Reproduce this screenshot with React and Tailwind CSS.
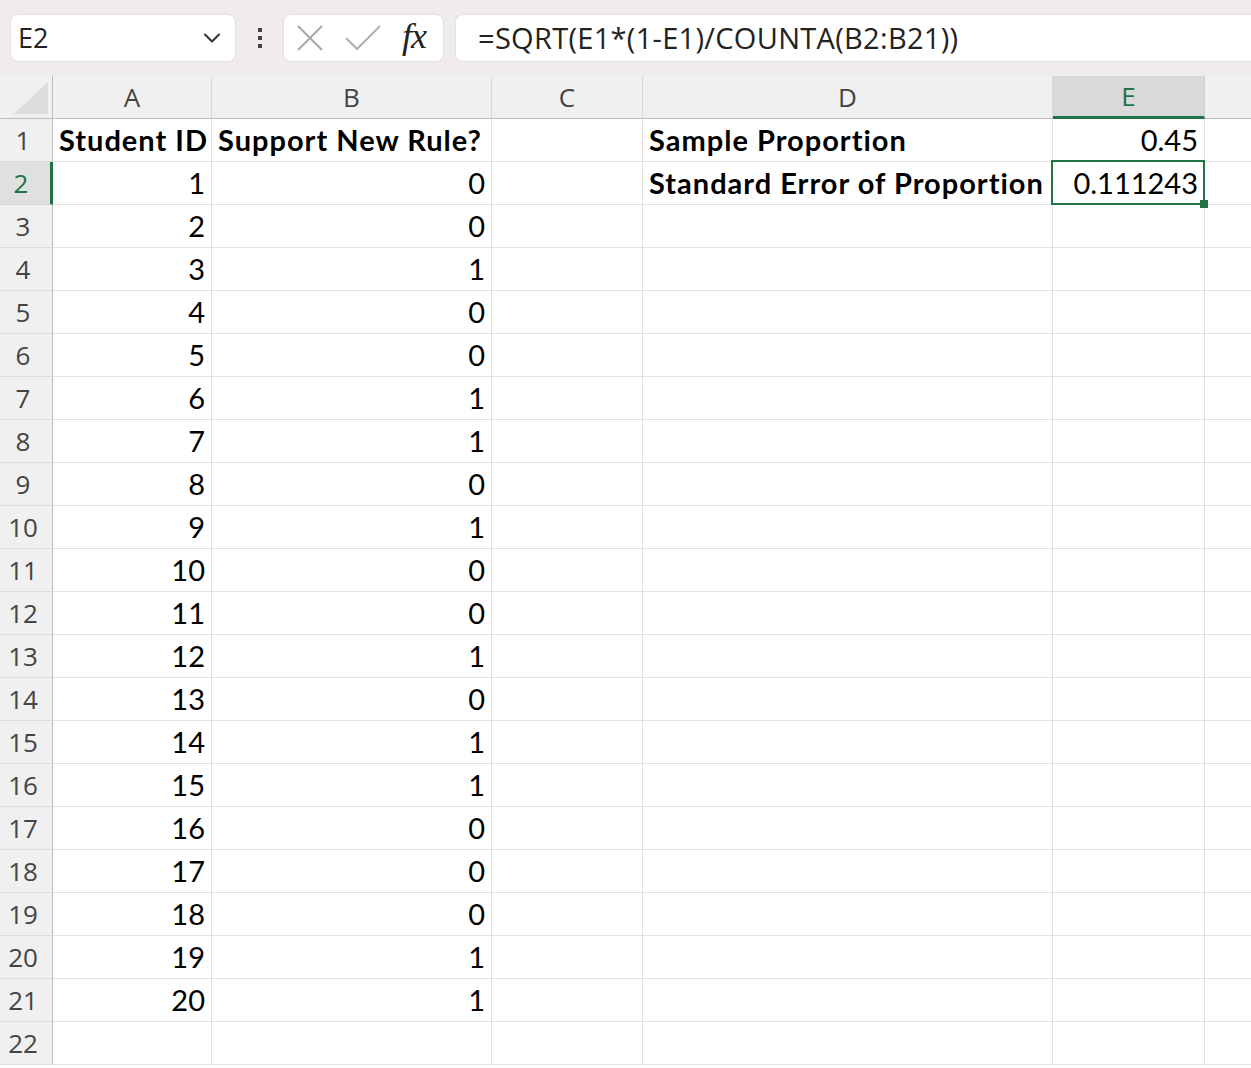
import { ChevronDown } from "lucide-react";

const cols = [
  { key: "A", w: 159 },
  { key: "B", w: 280 },
  { key: "C", w: 151 },
  { key: "D", w: 410 },
  { key: "E", w: 152 },
  { key: "F", w: 200 },
];

const support = [0, 0, 1, 0, 0, 1, 1, 0, 1, 0, 0, 1, 0, 1, 1, 0, 0, 0, 1, 1];

const cellFont = { fontFamily: "Lato, 'Liberation Sans', sans-serif" };
const uiFont = { fontFamily: "'Open Sans', 'Noto Sans', sans-serif" };

function cellValue(row, col) {
  if (row === 1) {
    if (col === "A") return { text: "Student ID", bold: true };
    if (col === "B") return { text: "Support New Rule?", bold: true };
    if (col === "D") return { text: "Sample Proportion", bold: true };
    if (col === "E") return { text: "0.45", right: true };
  }
  if (row === 2) {
    if (col === "D") return { text: "Standard Error of Proportion", bold: true };
    if (col === "E") return { text: "0.111243", right: true };
  }
  if (row >= 2 && row <= 21) {
    if (col === "A") return { text: String(row - 1), right: true };
    if (col === "B") return { text: String(support[row - 2]), right: true };
  }
  return null;
}

function Toolbar() {
  return (
    <div className="h-[76px] bg-[#efeceb] flex items-center pl-[10px]" style={uiFont}>
      <div className="w-[226px] h-[48px] bg-white rounded-lg border border-[#e3e0de] flex items-center justify-between pl-[7px] pr-[9px]">
        <span className="text-[27px] text-[#222]">E2</span>
        <ChevronDown size={28} strokeWidth={1.8} className="text-[#333]" />
      </div>
      <div className="w-[47px] flex flex-col items-center justify-center gap-[4px]">
        <span className="w-[4px] h-[4px] bg-[#444]" />
        <span className="w-[4px] h-[4px] bg-[#444]" />
        <span className="w-[4px] h-[4px] bg-[#444]" />
      </div>
      <div className="w-[161px] h-[48px] bg-white rounded-lg border border-[#e3e0de] flex items-center pl-[12px]">
        <svg width="28" height="28" viewBox="0 0 28 28">
          <path d="M2 2 L26 26 M26 2 L2 26" stroke="#a8a8a8" strokeWidth="2" fill="none" />
        </svg>
        <svg width="38" height="28" viewBox="0 0 38 28" className="ml-[20px]">
          <path d="M2 14 L13 25 L36 2" stroke="#b0b0b0" strokeWidth="2" fill="none" />
        </svg>
        <span
          className="ml-[20px] text-[36px] italic text-[#222] leading-none -mt-[4px] tracking-[-1px]"
          style={{ fontFamily: "'Liberation Serif', serif" }}
        >
          fx
        </span>
      </div>
      <div className="ml-[11px] flex-1 h-[48px] bg-white rounded-l-lg border border-r-0 border-[#e3e0de] flex items-center pl-[22px]">
        <span className="text-[29px] text-[#222] tracking-[0.3px]">=SQRT(E1*(1-E1)/COUNTA(B2:B21))</span>
      </div>
    </div>
  );
}

function HeaderRow() {
  return (
    <div className="flex h-[43px]" style={uiFont}>
      <div className="w-[53px] shrink-0 bg-[#f0f0f0] border-r border-b border-[#bdbdbd] flex items-end justify-end p-[4px]">
        <svg width="34" height="32" viewBox="0 0 34 32">
          <path d="M34 0 L34 32 L0 32 Z" fill="#dcdcdc" />
        </svg>
      </div>
      {cols.map((c) => {
        const active = c.key === "E";
        return (
          <div
            key={c.key}
            style={{ width: c.w }}
            className={
              active
                ? "shrink-0 bg-[#d9d9d9] border-r border-[#cfcfcf] border-b-[3px] border-b-[#217346] flex items-center justify-center text-[26px] text-[#217346]"
                : "shrink-0 bg-[#f0f0f0] border-r border-[#d8d8d8] border-b border-b-[#bdbdbd] flex items-center justify-center text-[26px] text-[#444]"
            }
          >
            {c.key === "F" ? "" : c.key}
          </div>
        );
      })}
    </div>
  );
}

function Row({ n }) {
  const active = n === 2;
  return (
    <div className="flex h-[43px]">
      <div
        style={uiFont}
        className={
          active
            ? "w-[53px] shrink-0 bg-[#e0e0e0] border-r-[3px] border-r-[#217346] border-b border-[#d4d4d4] flex items-center justify-center pr-[8px] text-[26px] text-[#217346]"
            : "w-[53px] shrink-0 bg-[#f0f0f0] border-r border-r-[#bdbdbd] border-b border-[#dedede] flex items-center justify-center pr-[6px] text-[26px] text-[#444]"
        }
      >
        {n}
      </div>
      {cols.map((c) => {
        const v = cellValue(n, c.key);
        const selected = n === 2 && c.key === "E";
        return (
          <div
            key={c.key}
            style={{ width: c.w, ...cellFont }}
            className={
              "relative shrink-0 bg-white border-r border-b border-[#e1e1e1] flex items-center px-[6px] text-[29px] text-black whitespace-nowrap " +
              (v && v.right ? "justify-end" : "justify-start") +
              (v && v.bold ? " font-bold tracking-[1px]" : "") +
              (selected ? " z-10" : "")
            }
          >
            {v ? v.text : ""}
            {selected && (
              <>
                <div className="absolute -left-[2px] -top-[2px] -right-[1px] -bottom-[1px] border-2 border-[#217346] pointer-events-none" />
                <div className="absolute -right-[4px] -bottom-[4px] w-[8px] h-[8px] bg-[#217346]" />
              </>
            )}
          </div>
        );
      })}
    </div>
  );
}

export default function App() {
  const rows = Array.from({ length: 22 }, (_, i) => i + 1);
  return (
    <div className="w-[1251px] h-[1068px] overflow-hidden bg-white">
      <Toolbar />
      <HeaderRow />
      {rows.map((n) => (
        <Row key={n} n={n} />
      ))}
    </div>
  );
}
